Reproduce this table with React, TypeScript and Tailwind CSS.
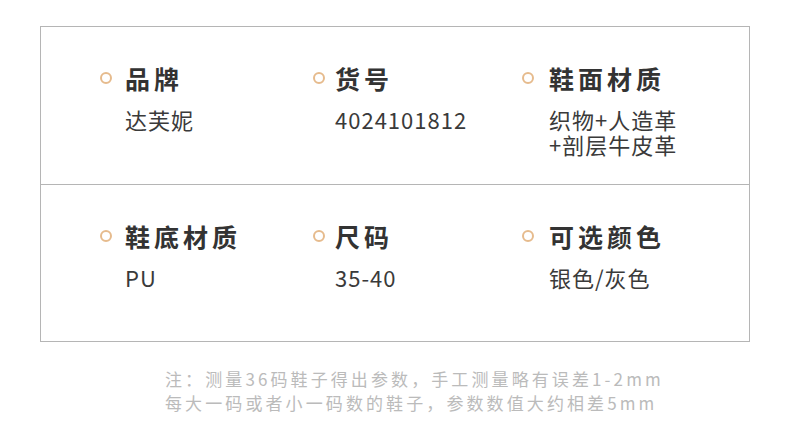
const rows = [
  [
    { title: '品牌', value: ['达芙妮'] },
    { title: '货号', value: ['4024101812'] },
    { title: '鞋面材质', value: ['织物+人造革', '+剖层牛皮革'] },
  ],
  [
    { title: '鞋底材质', value: ['PU'] },
    { title: '尺码', value: ['35-40'] },
    { title: '可选颜色', value: ['银色/灰色'] },
  ],
];

// offset between circle and text differs a little per column in the design
const gaps = ['ml-[13px]', 'ml-[10px]', 'ml-[15px]'];

function Cell({ title, value, gap }: { title: string; value: string[]; gap: string }) {
  return (
    <div className="flex flex-col">
      <div className="flex items-center h-[28px]">
        <span className="w-[12px] h-[12px] rounded-full border-2 border-[#e6bb8d] shrink-0" />
        <span className={`${gap} text-[25px] leading-[28px] font-bold tracking-[4px] text-[#333333]`}>
          {title}
        </span>
      </div>
      <div className="flex mt-[15px]">
        <span className="w-[12px] shrink-0" />
        <div className={`${gap} text-[22px] leading-[25px] tracking-[1px] text-[#3a3a3a]`}>
          {value.map((v) => (
            <div key={v}>{v}</div>
          ))}
        </div>
      </div>
    </div>
  );
}

export default function App() {
  return (
    <div
      className="w-[790px] h-[435px] bg-white overflow-hidden"
      style={{ fontFamily: '"Noto Sans CJK SC", "Noto Sans", sans-serif' }}
    >
      <div className="h-[26px]" />
      <div className="ml-[40px] w-[710px] border border-[#b5b5b5]">
        {rows.map((row, i) => (
          <div
            key={i}
            className={
              i === 0
                ? 'h-[158px] border-b border-[#b5b5b5] pt-[37px] pl-[59px] grid grid-cols-[213px_209px_1fr]'
                : 'h-[156px] pt-[37px] pl-[59px] grid grid-cols-[213px_209px_1fr]'
            }
          >
            {row.map((c, j) => (
              <Cell key={c.title} title={c.title} value={c.value} gap={gaps[j]} />
            ))}
          </div>
        ))}
      </div>
      <div className="mt-[25px] pl-[165px] text-[17px] leading-[24px] tracking-[3.1px] text-[#bbbbbb]">
        <div>注：测量36码鞋子得出参数，手工测量略有误差1-2mm</div>
        <div>每大一码或者小一码数的鞋子，参数数值大约相差5mm</div>
      </div>
    </div>
  );
}
